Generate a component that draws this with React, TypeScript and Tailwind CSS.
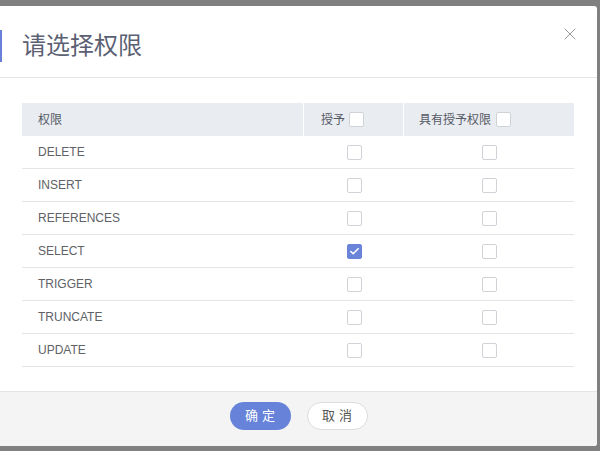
import { X, Check } from 'lucide-react';

const rows = [
  { name: 'DELETE', grant: false, admin: false },
  { name: 'INSERT', grant: false, admin: false },
  { name: 'REFERENCES', grant: false, admin: false },
  { name: 'SELECT', grant: true, admin: false },
  { name: 'TRIGGER', grant: false, admin: false },
  { name: 'TRUNCATE', grant: false, admin: false },
  { name: 'UPDATE', grant: false, admin: false },
];

const Box = ({ checked = false }: { checked?: boolean }) =>
  checked ? (
    <span className="w-[15px] h-[15px] rounded-[2px] bg-[#6a84da] border border-[#6a84da] flex items-center justify-center">
      <Check size={11} strokeWidth={3.5} className="text-white" />
    </span>
  ) : (
    <span className="w-[15px] h-[15px] rounded-[2px] bg-white border border-[#cfd2d6]" />
  );

export default function App() {
  return (
    <div
      className="w-[600px] h-[451px] bg-[#808080] pt-[6px] overflow-hidden"
      style={{ fontFamily: '"Liberation Sans", "Noto Sans CJK SC", sans-serif' }}
    >
      <div className="w-[597px] h-[440px] bg-white rounded-r-[3px] flex flex-col overflow-hidden">
        {/* header */}
        <div className="h-[72px] border-b border-[#e6e6e6] relative pt-[24px] shrink-0">
          <div className="border-l-2 border-[#6a80d8] h-[32px] flex items-center pl-[20px]">
            <h1 className="text-[24px] leading-none text-[#5b6073]">请选择权限</h1>
          </div>
          <button className="absolute right-[17px] top-[18px] text-[#9a9a9a]">
            <X size={20} strokeWidth={1.2} />
          </button>
        </div>

        {/* body */}
        <div className="flex-1 pt-[25px] pl-[22px] pr-[23px]">
          <div className="text-[12px] text-[#606266]">
            <div className="h-[33px] bg-[#e9ecf1] flex items-center text-[#555a66]">
              <div className="w-[282px] pl-4 border-r border-white h-full flex items-center">权限</div>
              <div className="w-[100px] pl-[17px] border-r border-white h-full flex items-center gap-[4px]">
                <span>授予</span>
                <Box />
              </div>
              <div className="flex-1 pl-[15px] h-full flex items-center gap-[5px]">
                <span>具有授予权限</span>
                <Box />
              </div>
            </div>
            {rows.map((r) => (
              <div key={r.name} className="h-[33px] border-b border-[#e5e5e5] flex items-center">
                <div className="w-[282px] pl-4">{r.name}</div>
                <div className="w-[100px] flex justify-center pl-[1px]">
                  <Box checked={r.grant} />
                </div>
                <div className="flex-1 flex justify-center">
                  <Box checked={r.admin} />
                </div>
              </div>
            ))}
          </div>
        </div>

        {/* footer */}
        <div className="h-[55px] shrink-0 border-t border-[#e4e4e4] bg-[#f4f4f4] flex justify-center gap-4 pt-[10px]">
          <button className="w-[61px] h-[28px] rounded-full bg-[#6782d9] text-white text-[13px] tracking-[4px] pl-[4px]">
            确定
          </button>
          <button className="w-[61px] h-[28px] rounded-full bg-white border border-[#dcdcdc] text-[#555] text-[13px] tracking-[4px] pl-[4px]">
            取消
          </button>
        </div>
      </div>
    </div>
  );
}
